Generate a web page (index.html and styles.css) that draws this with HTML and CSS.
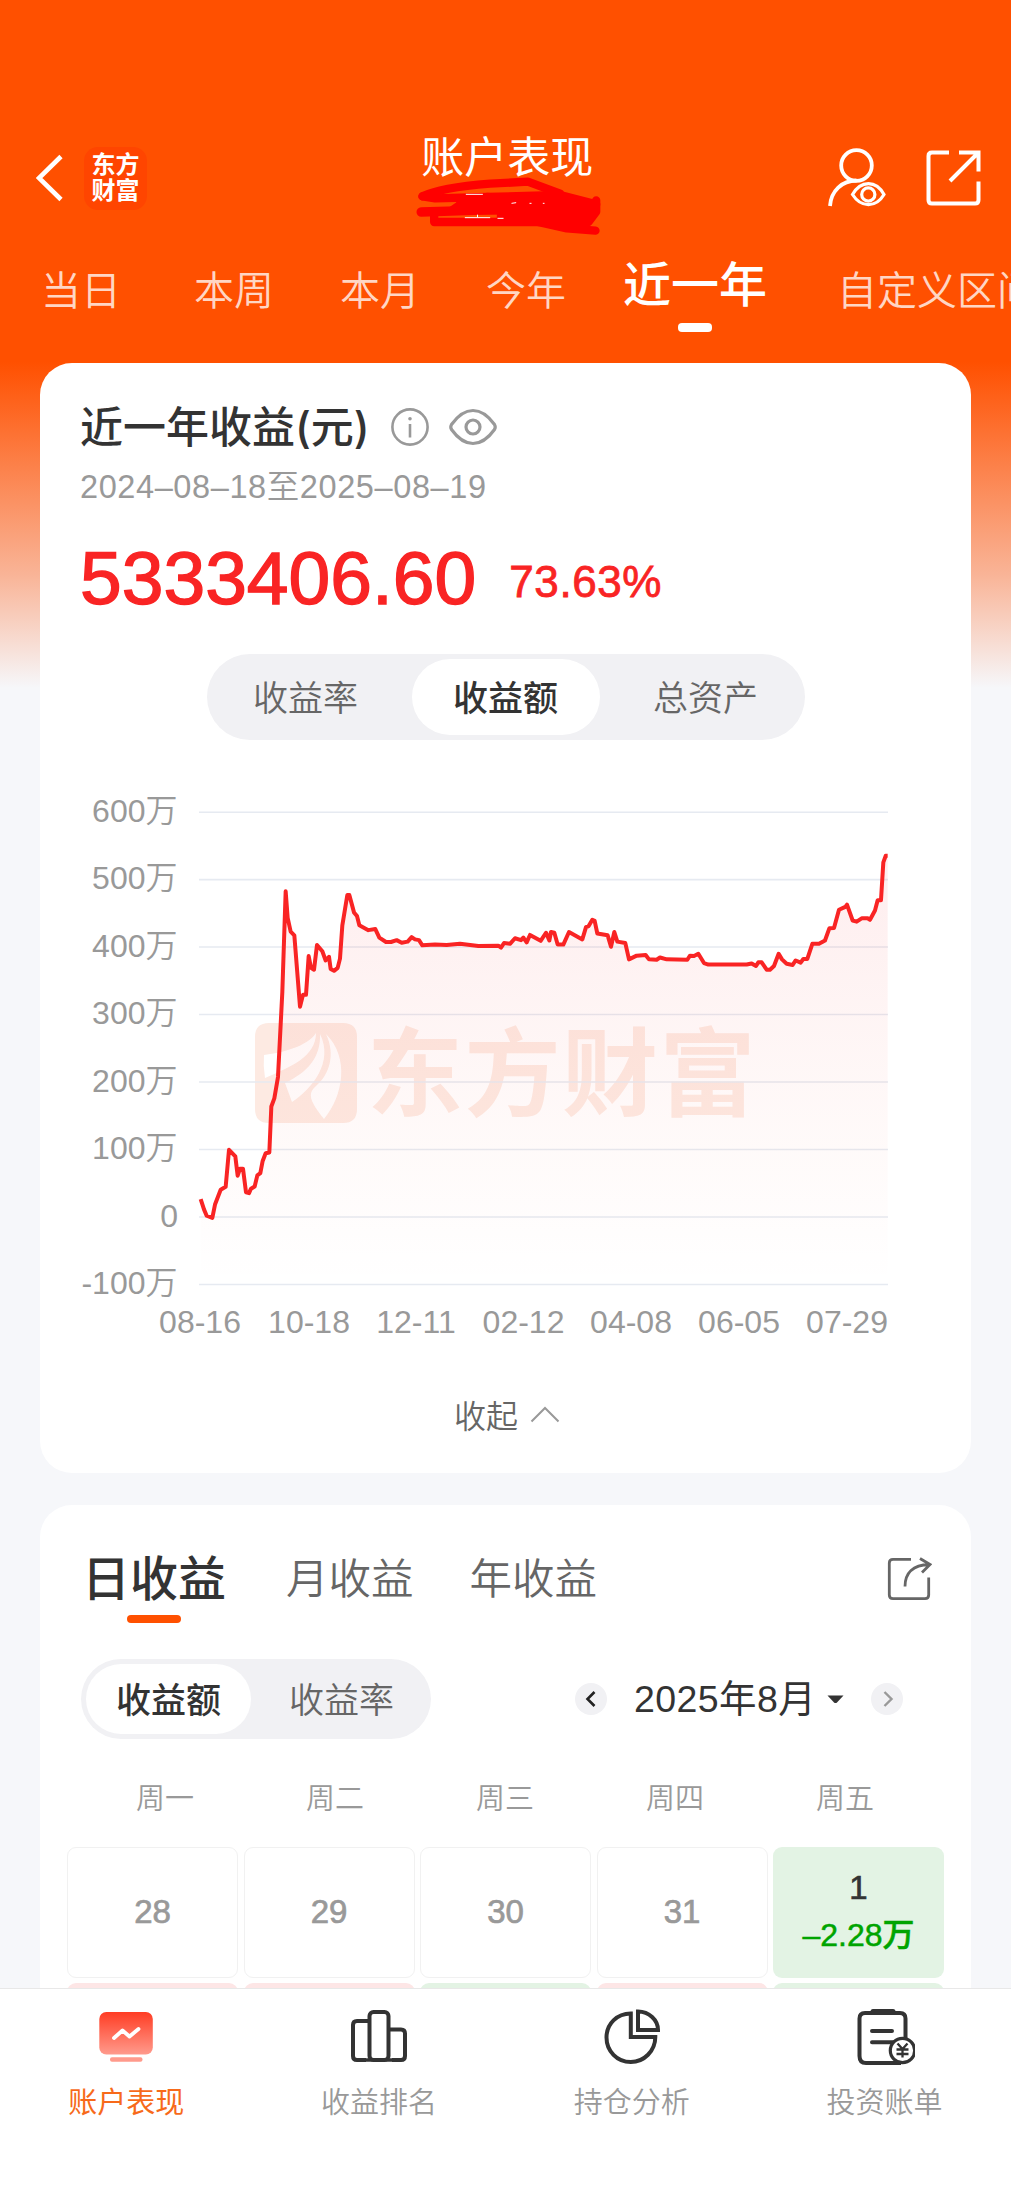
FILE: index.html
```html
<!DOCTYPE html>
<html lang="zh-CN">
<head>
<meta charset="utf-8">
<title>账户表现</title>
<link rel="stylesheet" href="styles.css">
</head>
<body>
<div class="app">
  <div class="content">
    <header class="topbar">
      <div class="topbar-left">
        <svg class="back" viewBox="0 0 28 48" width="28" height="48"><path d="M25 2.500L3 24L25 45.500" fill="none" stroke="#fff" stroke-width="4.600"/></svg>
        <div class="brand"><span>东方</span><span>财富</span></div>
      </div>
      <div class="topbar-title">
        <h1>账户表现</h1>
        <svg class="scribble" viewBox="25 155 560 180" width="187" height="60">
          <g fill="none" stroke="#f00" stroke-width="25" stroke-linecap="round" stroke-linejoin="round">
            <path d="M47 216Q100 190 250 178L363 172L460 208"/>
            <path d="M47 216L85 222L240 218L460 212L530 230L568 240"/>
            <path d="M82 264V293H545L568 262V228"/>
            <path d="M380 290L480 312L566 319"/>
            <path d="M160 240L240 222L450 225L540 240L540 260"/>
          </g>
          <path d="M43 263L200 258L560 252" fill="none" stroke="#f00" stroke-width="28" stroke-linecap="round"/>
          <path d="M125 250L150 233L240 205L520 225L568 245L545 300L400 300L270 284L270 262Z" fill="#f00"/>
          <path d="M177 210H228M174 280H250M212 271V279M272 282H290M314 237L328 235M368 237H374M408 237H413" fill="none" stroke="#fff" stroke-width="3"/>
        </svg>
      </div>
      <div class="topbar-right">
        <svg viewBox="0 0 58 60" width="58" height="60" fill="none" stroke="#fff" stroke-width="3.800">
          <circle cx="28.500" cy="17.500" r="15.300"/>
          <path d="M2 58C3 43 14 32.500 28.500 32.500" />
          <path d="M24.500 46.500C33 32 48 32 56 46.500C48 60 33 60 24.500 46.500Z" fill="#ff5000" stroke-width="3.200"/>
          <circle cx="40.300" cy="46.500" r="6.600" stroke-width="3.200"/>
        </svg>
        <svg viewBox="0 0 56 56" width="56" height="56" fill="none" stroke="#fff" stroke-width="4">
          <path d="M23 2.500H6Q2.500 2.500 2.500 6V50Q2.500 53.500 6 53.500H49Q52.500 53.500 52.500 50V31.500M33 2.500H52.500V21.500M52 3L24 31"/>
        </svg>
      </div>
    </header>

    <nav class="ranges">
      <span class="range range-first">当日</span>
      <span class="range">本周</span>
      <span class="range">本月</span>
      <span class="range">今年</span>
      <span class="range range-active">近一年</span>
      <span class="range">自定义区间</span>
    </nav>

    <section class="card summary">
      <div class="summary-head">
        <h2>近一年收益(元)</h2>
        <svg class="info" viewBox="0 0 40 40" width="40" height="40" fill="none" stroke="#999" stroke-width="2.600"><circle cx="20" cy="20" r="17.600"/><path d="M20 17V30.500"/><circle cx="20" cy="11.800" r="1.800" fill="#999" stroke="none"/></svg>
        <svg class="eye" viewBox="0 0 50 40" width="50" height="40" fill="none" stroke="#999" stroke-width="3.200"><path d="M3.500 17.500Q13.500 3.500 25 3.500T46.500 17.500Q48 20 46.500 22.500Q36.500 36.500 25 36.500T3.500 22.500Q2 20 3.500 17.500Z"/><circle cx="25" cy="20" r="7"/></svg>
      </div>
      <p class="period">2024–08–18至2025–08–19</p>
      <div class="totals"><span class="amount">5333406.60</span><span class="percent">73.63%</span></div>
      <div class="segment segment-wide"><span>收益率</span><span class="on">收益额</span><span>总资产</span></div>

      <svg class="chart" viewBox="70 780 840 570" width="840" height="570">
        <defs>
          <linearGradient id="fill" x1="0" y1="0" x2="0" y2="1">
            <stop offset="0" stop-color="#f5222d" stop-opacity=".08"/>
            <stop offset=".75" stop-color="#f5402d" stop-opacity=".02"/>
            <stop offset="1" stop-color="#f5222d" stop-opacity="0"/>
          </linearGradient>
        </defs>
        <g fill="#fdeae2">
          <path fill-rule="evenodd" d="M269 1023H343Q357 1023 357 1037V1109Q357 1123 343 1123H269Q255 1123 255 1109V1037Q255 1023 269 1023ZM264 1055C290 1052 310 1043 316 1033C316 1057 290 1067 265 1078Q263 1066 264 1055ZM285 1083C308 1072 321 1057 320 1034C334 1062 312 1089 292 1102ZM324 1119C310 1101 307 1094 316 1086C329 1075 336 1055 326 1034C350 1058 343 1096 324 1119Z"/>
          <text class="watermark" x="367" y="1108">东方财富</text>
        </g>
        <g stroke="#e6eaf1" stroke-width="1.600">
          <path d="M199 812.200H888M199 879.600H888M199 947H888M199 1014.500H888M199 1082H888M199 1149.500H888M199 1217H888M199 1284.500H888"/>
        </g>
        <g transform="translate(60 770) scale(.33333 .36985)">
          <path fill="url(#fill)" d="M422 1160L432 1188L440 1205L457 1211L465 1175L482 1135L497 1127L507 1027L526 1045L533 1097L540 1078H549L558 1142L567 1144L573 1132L584 1126L592 1096L601 1090L608 1057L617 1036L628 1034L634 910L643 888L654 830L667 600L677 328L683 400L692 437L703 447L720 640L729 608H738L746 503L753 535L762 540L771 473L787 490L797 515L807 505L812 538L822 543L833 535L840 510L847 420L862 338H868L882 385L891 395L898 420L925 433L946 430L958 453L978 465H993L1010 460L1025 467L1043 464L1055 452L1077 460L1087 474L1200 470L1255 476L1323 480L1365 455L1410 446L1442 462L1458 440L1483 440L1493 472H1510L1527 438L1567 458L1578 425L1597 405L1612 442L1643 447L1672 464L1696 468L1707 512L1757 500L1767 512H1882L1915 497L1932 522L1945 526H2060L2105 520L2120 540L2142 530L2156 497L2180 524L2242 511L2257 470L2277 470L2295 461L2308 428L2322 427L2337 378L2361 364L2378 407L2405 401L2430 405L2445 380L2453 352H2463L2470 250L2477 232H2483V1391H422Z"/>
          <path fill="none" stroke="#f92424" stroke-width="4" stroke-linejoin="round" vector-effect="non-scaling-stroke" d="M422 1160L432 1188L440 1205L457 1211L465 1175L482 1135L497 1127L507 1027L526 1045L533 1097L540 1078H549L558 1142L567 1144L573 1132L584 1126L592 1096L601 1090L608 1057L617 1036L628 1034L634 910L643 888L654 830L667 600L677 328L683 400L692 437L703 447L720 640L729 608H738L746 503L753 535L762 540L771 473L787 490L797 515L807 505L812 538L822 543L833 535L840 510L847 420L862 338H868L882 385L891 395L898 420L925 433L946 430L958 453L978 465H993L1010 460L1025 467L1043 464L1055 452L1065 458L1077 460L1087 474L1125 472L1160 473L1200 470L1255 476L1315 475L1323 480L1332 468L1350 470L1365 455L1383 460L1390 453L1400 466L1410 446L1442 462L1458 440L1468 461L1473 438L1483 440L1493 472H1510L1527 438L1567 458L1578 425L1586 422L1597 405L1604 408L1612 442L1643 447L1653 478L1663 438L1672 464L1696 468L1707 512L1730 502L1757 500L1767 512L1790 513L1800 507L1820 512L1882 513L1890 502L1902 503L1915 497L1932 522L1945 526H2060L2075 523L2088 530L2095 520H2105L2120 540H2130L2142 530L2156 497L2166 512L2180 524L2198 527L2207 515L2222 521L2230 511H2242L2257 470H2277L2295 461L2308 428L2322 427L2337 378L2356 370L2361 364L2378 407L2390 410L2405 401H2423L2430 405L2445 380L2453 352H2463L2470 250L2477 232H2483"/>
        </g>
        <g class="axis" text-anchor="end">
          <text x="177.500" y="821.500">600万</text><text x="177.500" y="889">500万</text><text x="177.500" y="956.500">400万</text><text x="177.500" y="1024">300万</text><text x="177.500" y="1091.500">200万</text><text x="177.500" y="1159">100万</text><text x="178" y="1226.500">0</text><text x="177.500" y="1294">-100万</text>
        </g>
        <g class="axis" text-anchor="middle">
          <text x="200" y="1332.500">08-16</text><text x="309" y="1332.500">10-18</text><text x="416" y="1332.500">12-11</text><text x="523.500" y="1332.500">02-12</text><text x="631" y="1332.500">04-08</text><text x="739" y="1332.500">06-05</text><text x="847" y="1332.500">07-29</text>
        </g>
      </svg>

      <div class="collapse"><span>收起</span><svg viewBox="0 0 30 18" width="30" height="18"><path d="M1.500 16.500L15 3L28.500 16.500" fill="none" stroke="#999" stroke-width="2"/></svg></div>
    </section>

    <section class="card calendar">
      <div class="cal-tabs">
        <span class="cal-tab cal-tab-active">日收益</span>
        <span class="cal-tab">月收益</span>
        <span class="cal-tab">年收益</span>
        <svg class="share" viewBox="0 0 46 46" width="46" height="46" fill="none" stroke="#666" stroke-width="2.800"><path d="M25 3.300H7Q3.300 3.300 3.300 7V39Q3.300 42.700 7 42.700H39Q42.700 42.700 42.700 39V21.500M19 30.500C19 17 27 9 43 8.500M34 2.500L44 8.500L36 16.500"/></svg>
      </div>
      <div class="cal-bar">
        <div class="segment segment-small"><span class="on">收益额</span><span>收益率</span></div>
        <div class="month">
          <span class="round"><svg viewBox="0 0 32 32" width="32" height="32"><path d="M19.500 9L12.500 16L19.500 23" fill="none" stroke="#222" stroke-width="2.600"/></svg></span>
          <span class="month-name">2025年8月</span>
          <svg class="caret" viewBox="0 0 17 9" width="17" height="9"><path d="M.500.500H16.500L10 7.500Q8.500 8.700 7 7.500Z" fill="#333"/></svg>
          <span class="round"><svg viewBox="0 0 32 32" width="32" height="32"><path d="M13.500 9L20.500 16L13.500 23" fill="none" stroke="#999" stroke-width="2.400"/></svg></span>
        </div>
      </div>
      <div class="weekdays"><span>周一</span><span>周二</span><span>周三</span><span>周四</span><span>周五</span></div>
      <div class="days">
        <div class="day">28</div><div class="day">29</div><div class="day">30</div><div class="day">31</div>
        <div class="day loss"><span class="date">1</span><span class="value">–2.28万</span></div>
        <div class="day gain"></div><div class="day gain"></div><div class="day loss"></div><div class="day gain"></div><div class="day loss"></div>
      </div>
    </section>
  </div>

  <nav class="tabbar">
    <div class="tab tab-active">
      <svg viewBox="0 0 60 60" width="60" height="60"><defs><linearGradient id="screen" x1="0" y1="0" x2="0" y2="1"><stop offset="0" stop-color="#ff3d24"/><stop offset="1" stop-color="#ff9a8c"/></linearGradient></defs><rect x="3.300" y="5" width="53.500" height="42.500" rx="7" fill="url(#screen)"/><rect x="14" y="50.300" width="32.500" height="4.400" rx="2" fill="#ff9a8c"/><path d="M18 31L26.500 23.500L33.500 29.500L42.500 22" fill="none" stroke="#fff" stroke-width="3.800" stroke-linecap="round" stroke-linejoin="round"/></svg>
      <span>账户表现</span>
    </div>
    <div class="tab">
      <svg viewBox="0 0 60 60" width="60" height="60" fill="none" stroke="#333" stroke-width="4"><path d="M19.500 14H8Q4 14 4 18V49Q4 53 8 53H17M41 22.500H52Q56 22.500 56 26.500V49Q56 53 52 53H43"/><rect x="20.500" y="5" width="19" height="48" rx="4"/><path d="M17 53H43" stroke-width="3.500"/></svg>
      <span>收益排名</span>
    </div>
    <div class="tab">
      <svg viewBox="0 0 60 60" width="60" height="60" fill="none" stroke="#333" stroke-width="4"><path d="M28.800 6.500V30H53.300C53.300 44 42 55 28.800 55C15 55 4.500 44 4.500 30.500C4.500 17 15 6.500 28.800 6.500Z"/><path d="M36 4.500V23H56C56 13 47 4.500 36 4.500Z"/></svg>
      <span>持仓分析</span>
    </div>
    <div class="tab">
      <svg viewBox="0 0 60 60" width="60" height="60" fill="none" stroke="#333" stroke-width="4"><path d="M50.500 31V11.500Q50.500 6 45 6H10Q4.500 6 4.500 11.500V49Q4.500 56 11 56H46"/><path d="M18 4.500H38" stroke-width="5" stroke-linecap="round"/><path d="M17 24H37M17 35.300H38" stroke-linecap="round"/><circle cx="47.500" cy="43.500" r="12.200" fill="#fff" stroke-width="3.200"/><path d="M42.500 36.500L47.500 42L52.500 36.500M47.500 42V50.500M41.500 42.500H53.500M41.500 47H53.500" stroke-width="2.300"/></svg>
      <span>投资账单</span>
    </div>
  </nav>
</div>
</body>
</html>
```
FILE: styles.css
```css
* { box-sizing: border-box; margin: 0; padding: 0; }

body {
  width: 1011px;
  font-family: Inter, "Noto Sans CJK SC", sans-serif;
  color: #333;
  background: #f6f7fa;
}

svg { display: block; flex: none; }

.app { display: flex; flex-direction: column; height: 2191px; overflow: hidden; }

.content {
  height: 1988px;
  overflow: hidden;
  background: linear-gradient(#ff5000 0, #ff5000 362px, #f9b497 575px, #f6f7fa 688px);
}

/* Top bar */
.topbar {
  display: grid;
  grid-template-columns: 1fr 187px 1fr;
  height: 242px;
  padding: 130px 29.5px 0 36px;
}
.topbar-left { display: flex; align-items: center; height: 96px; gap: 20px; }
.brand {
  display: flex;
  flex-direction: column;
  align-items: center;
  justify-content: center;
  width: 63px;
  height: 63px;
  border-radius: 14px;
  background: #ff4500;
  color: #fff;
  font-size: 24px;
  font-weight: 700;
  line-height: 26px;
}
.topbar-title { display: flex; flex-direction: column; align-items: center; }
.topbar-title h1 { margin-right: 3px; padding-top: 3px; color: #fff; font-size: 43px; font-weight: 400; line-height: 48px; }
.scribble { margin-top: -5px; }
.topbar-right { display: flex; align-items: center; justify-content: flex-end; height: 96px; gap: 40px; }

.ranges {
  display: flex;
  align-items: flex-start;
  gap: 66px;
  height: 121px;
  padding-left: 41px;
  white-space: nowrap;
}
.range { flex: none; padding-top: 20px; font-size: 40px; line-height: 58px; font-weight: 350; color: #ffd6c4; }
.range-first { margin-right: 7px; }
.range-active {
  display: flex;
  flex-direction: column;
  align-items: center;
  margin: 0 4px 0 -9px;
  padding-top: 14px;
  font-size: 48px;
  font-weight: 500;
  color: #fff;
}
.range-active::after { content: ""; width: 34px; height: 9px; margin-top: 9px; border-radius: 4px; background: #fff; }

/* Cards */
.card { margin: 0 40px; border-radius: 32px; background: #fff; }
.summary { height: 1110px; padding: 36px 40px 0; }
.summary-head { display: flex; align-items: center; height: 56px; }
.summary-head h2 { font-size: 43px; font-weight: 500; line-height: 56px; white-space: nowrap; }
.info { margin-left: 20px; }
.eye { margin-left: 18px; }
.period {
  margin-top: 10px;
  font-family: "Liberation Sans", "Noto Sans CJK SC", sans-serif;
  font-size: 32.5px;
  line-height: 44px;
  height: 42px;
  letter-spacing: .6px;
  color: #999;
  font-weight: 350;
}
.totals { display: flex; align-items: baseline; height: 116px; padding-top: 26px; color: #f92424; font-family: "Liberation Sans", sans-serif; }
.amount { font-size: 75px; line-height: 90px; -webkit-text-stroke: 1.4px #f92424; }
.percent { margin-left: 33px; font-size: 44px; letter-spacing: .6px; position: relative; top: -7px; -webkit-text-stroke: .8px #f92424; }

.segment { display: grid; border-radius: 43px; background: #f1f1f4; color: #666; font-size: 35px; }
.segment span { display: flex; align-items: center; justify-content: center; padding-bottom: 3px; border-radius: 38px; font-weight: 350; }
.segment .on { background: #fff; color: #333; font-weight: 500; }
.segment-wide { grid-template-columns: 188px 188px 188px; justify-content: space-between; width: 598px; height: 86px; margin: 31px auto 0; padding: 5px; }
.segment-small { grid-template-columns: 165px 181px; width: 350px; height: 80px; padding: 5px 0 5px 5px; }

.chart { margin: 40px 0 0 -10px; }
.axis { fill: #999; font-family: "Liberation Sans", "Noto Sans CJK SC", sans-serif; font-size: 32px; font-weight: 350; }
.watermark { font-family: "Noto Sans CJK SC", sans-serif; font-size: 96px; font-weight: 700; letter-spacing: 1.5px; }

.collapse { display: flex; align-items: center; justify-content: center; gap: 12px; height: 48px; margin: 40px 0 0 3px; color: #666; font-size: 32px; font-weight: 350; }

/* Calendar */
.calendar { margin-top: 32px; height: 760px; padding: 42px 27px 0; }
.cal-tabs { display: flex; align-items: flex-start; height: 112px; padding: 0 12px 0 15px; }
.cal-tab { margin-left: 60px; font-size: 42.5px; line-height: 64px; color: #666; font-weight: 350; }
.cal-tab + .cal-tab:not(:nth-child(2)) { margin-left: 56px; }
.cal-tab-active { display: flex; flex-direction: column; align-items: center; margin: 0; font-size: 48px; font-weight: 500; color: #333; }
.cal-tab-active::after { content: ""; width: 54px; height: 8px; margin: 4px 0 0 -1px; border-radius: 4px; background: #ff5000; }
.share { margin: 9px 0 0 auto; }
.cal-bar { display: flex; justify-content: space-between; align-items: center; height: 80px; padding: 0 41px 0 14px; }
.month { display: flex; align-items: center; }
.round { width: 32px; height: 32px; border-radius: 50%; background: #f1f1f4; }
.month-name { width: 183px; margin-left: 27px; font-family: "Liberation Sans", "Noto Sans CJK SC", sans-serif; font-size: 37.5px; line-height: 50px; letter-spacing: .4px; white-space: nowrap; }
.caret { margin: 0 27px 0 10px; }
.weekdays { display: grid; grid-template-columns: repeat(5, 170px); margin: 38px 0 0 13px; color: #999; font-size: 29px; line-height: 44px; text-align: center; font-weight: 350; }
.days { display: grid; grid-template-columns: repeat(5, 171px); gap: 5px 5.500px; width: 877px; margin-top: 26px; }
.day {
  display: flex;
  flex-direction: column;
  align-items: center;
  justify-content: center;
  height: 130.5px;
  border: 1.5px solid #f1f1f1;
  border-radius: 9px;
  color: #999;
  font-family: "Liberation Sans", "Noto Sans CJK SC", sans-serif;
  font-size: 33px;
  font-weight: 500;
  -webkit-text-stroke: .7px currentColor;
}
.gain { border: 0; background: #fde6e6; }
.loss { border: 0; background: #e3f3e4; }
.date { padding-top: 2px; color: #333; line-height: 44px; }
.value { color: #00a400; font-size: 32px; line-height: 50px; -webkit-text-stroke: .5px currentColor; }

/* Bottom tabs */
.tabbar { display: grid; grid-template-columns: repeat(4, 1fr); height: 203px; border-top: 1px solid #e8e8e8; background: #fff; }
.tab { display: flex; flex-direction: column; align-items: center; padding-top: 18px; color: #999; font-size: 29px; line-height: 44px; }
.tab span { margin-top: 14px; font-weight: 350; }
.tab-active { color: #f76a1a; }
.tab-active span { font-weight: 400; }
```
